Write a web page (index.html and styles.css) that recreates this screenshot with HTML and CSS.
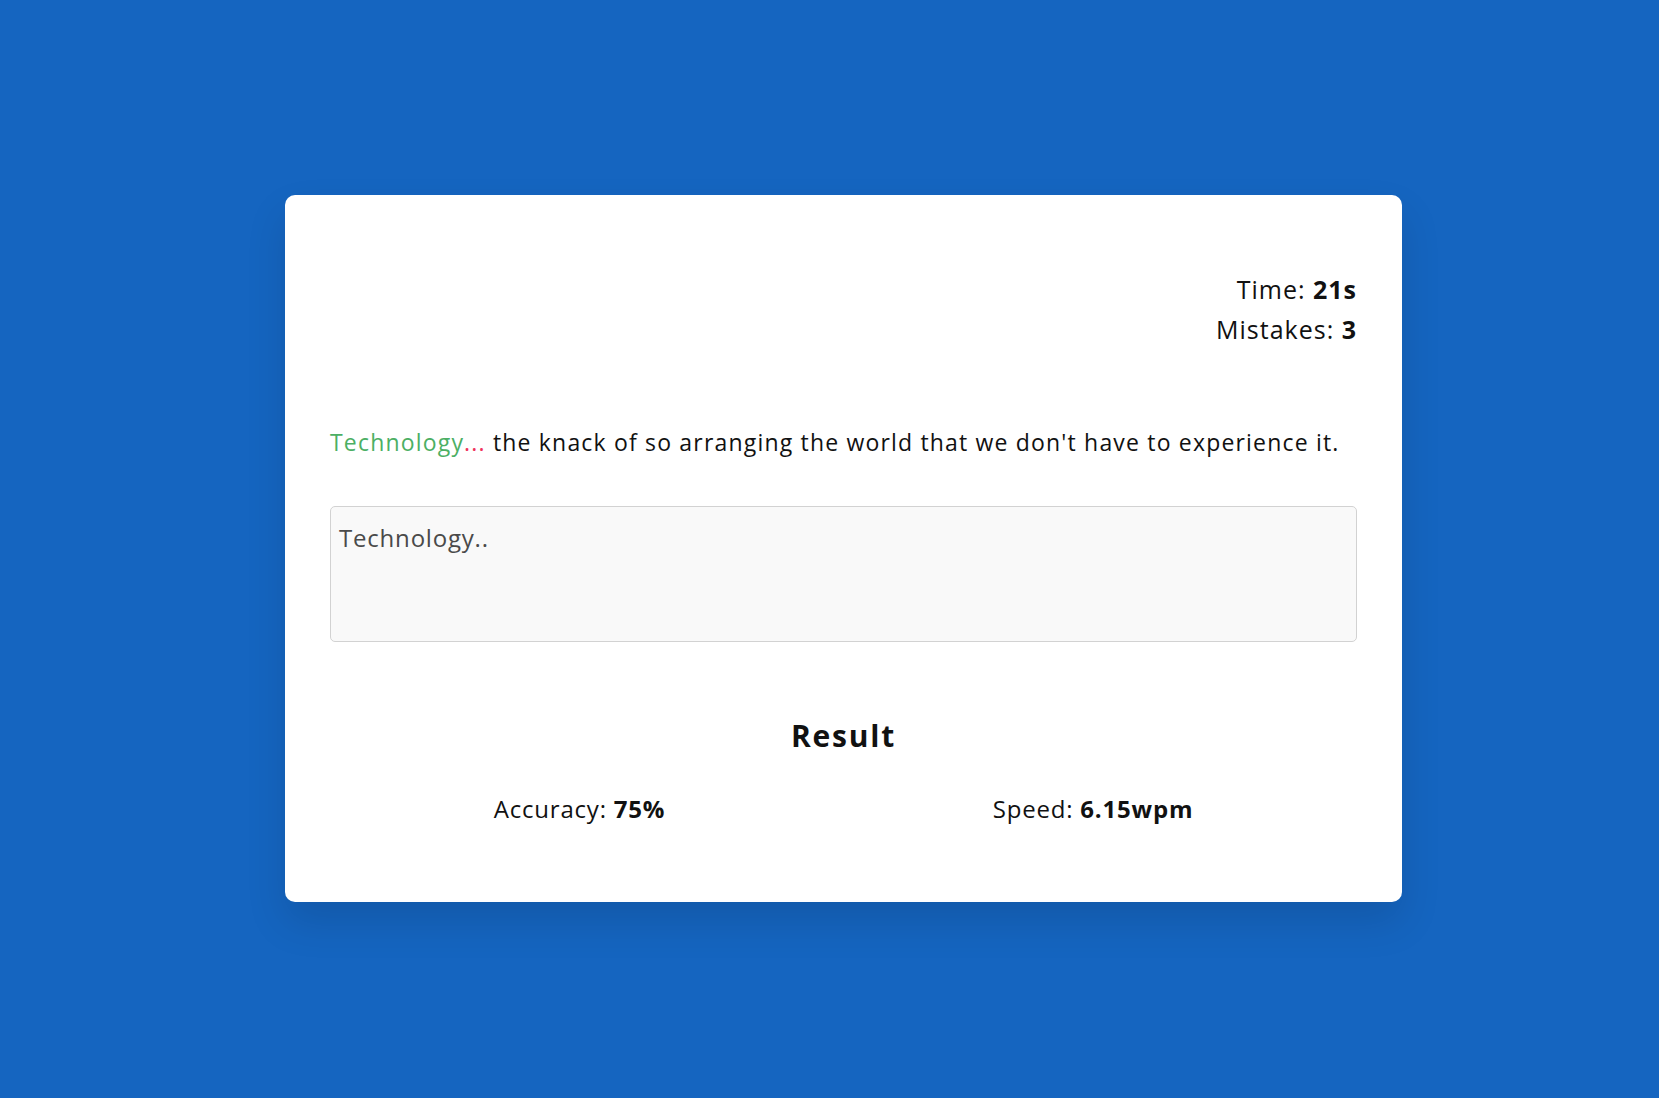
FILE: index.html
```html
<!DOCTYPE html>
<html lang="en">
<head>
<meta charset="utf-8">
<title>Typing Test</title>
<link rel="stylesheet" href="styles.css">
</head>
<body>
  <main class="card">
    <div class="stats">
      <p class="stat">Time: <b>21s</b></p>
      <p class="stat">Mistakes: <b>3</b></p>
    </div>
    <p class="quote"><span class="ok">Technology</span><span class="bad">...</span> the knack of so arranging the world that we don't have to experience it.</p>
    <textarea class="input" spellcheck="false">Technology..</textarea>
    <section class="result">
      <h2 class="result-title">Result</h2>
      <div class="result-row">
        <p class="metric">Accuracy: <b>75%</b></p>
        <p class="metric">Speed: <b>6.15wpm</b></p>
      </div>
    </section>
  </main>
</body>
</html>
```

FILE: styles.css
```css
* { box-sizing: border-box; }

html, body { height: 100%; }

body {
  margin: 0;
  background: #1565c0;
  font-family: "Open Sans", "Liberation Sans", sans-serif;
  color: #111;
  display: flex;
  align-items: center;
  justify-content: center;
  padding: 0 0 2px 28px;
}

.card {
  width: 1117px;
  background: #fff;
  border-radius: 10px;
  padding: 74px 45px 74px;
  box-shadow: 0 20px 40px rgba(0, 0, 0, 0.12);
}

.stats {
  text-align: right;
}

.stat {
  margin: 0;
  font-size: 25px;
  line-height: 40px;
  letter-spacing: 1px;
}

.stat b, .metric b { font-weight: 700; }

.quote {
  margin: 76px 0 0;
  font-size: 23px;
  line-height: 35px;
  letter-spacing: 1.18px;
}

.ok { color: #4caf64; }
.bad { color: #f0325a; }

.input {
  display: block;
  width: 100%;
  height: 136px;
  margin-top: 46px;
  padding: 14px 8px;
  border: 1px solid #d2d2d2;
  border-radius: 5px;
  background: #f9f9f9;
  color: #4a4a4a;
  font-family: inherit;
  font-size: 24px;
  letter-spacing: 0.8px;
  line-height: 1.4;
  resize: none;
  outline: none;
}

.result {
  margin-top: 73px;
}

.result-title {
  margin: 0;
  text-align: center;
  font-size: 30px;
  font-weight: 700;
  letter-spacing: 1.8px;
  line-height: 42px;
}

.result-row {
  display: flex;
  justify-content: space-around;
  margin-top: 33px;
}

.metric {
  margin: 0;
  font-size: 24px;
  line-height: 38px;
  letter-spacing: 0.8px;
}
```
